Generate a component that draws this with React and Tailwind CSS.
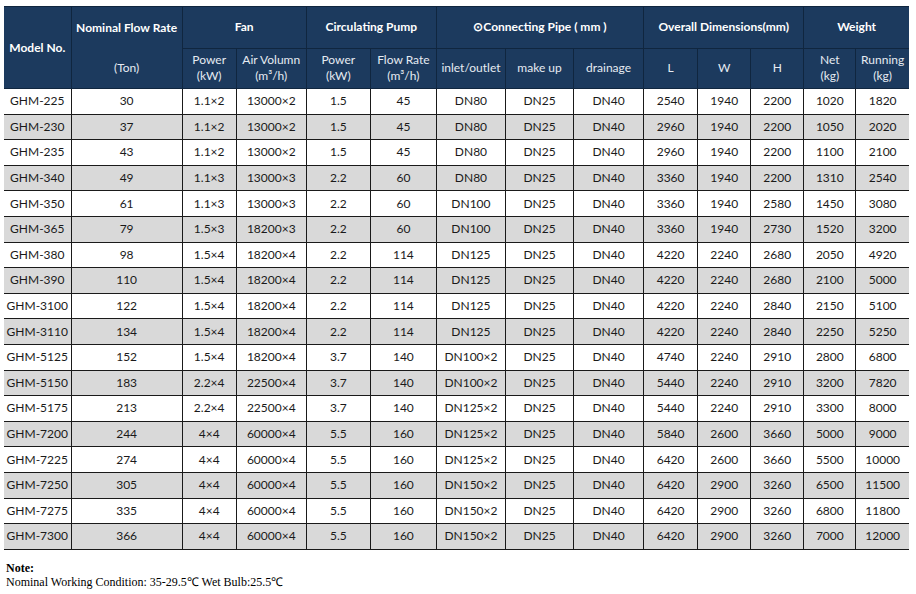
const ROWS = [
  ['GHM-225', '30', '1.1×2', '13000×2', '1.5', '45', 'DN80', 'DN25', 'DN40', '2540', '1940', '2200', '1020', '1820'],
  ['GHM-230', '37', '1.1×2', '13000×2', '1.5', '45', 'DN80', 'DN25', 'DN40', '2960', '1940', '2200', '1050', '2020'],
  ['GHM-235', '43', '1.1×2', '13000×2', '1.5', '45', 'DN80', 'DN25', 'DN40', '2960', '1940', '2200', '1100', '2100'],
  ['GHM-340', '49', '1.1×3', '13000×3', '2.2', '60', 'DN80', 'DN25', 'DN40', '3360', '1940', '2200', '1310', '2540'],
  ['GHM-350', '61', '1.1×3', '13000×3', '2.2', '60', 'DN100', 'DN25', 'DN40', '3360', '1940', '2580', '1450', '3080'],
  ['GHM-365', '79', '1.5×3', '18200×3', '2.2', '60', 'DN100', 'DN25', 'DN40', '3360', '1940', '2730', '1520', '3200'],
  ['GHM-380', '98', '1.5×4', '18200×4', '2.2', '114', 'DN125', 'DN25', 'DN40', '4220', '2240', '2680', '2050', '4920'],
  ['GHM-390', '110', '1.5×4', '18200×4', '2.2', '114', 'DN125', 'DN25', 'DN40', '4220', '2240', '2680', '2100', '5000'],
  ['GHM-3100', '122', '1.5×4', '18200×4', '2.2', '114', 'DN125', 'DN25', 'DN40', '4220', '2240', '2840', '2150', '5100'],
  ['GHM-3110', '134', '1.5×4', '18200×4', '2.2', '114', 'DN125', 'DN25', 'DN40', '4220', '2240', '2840', '2250', '5250'],
  ['GHM-5125', '152', '1.5×4', '18200×4', '3.7', '140', 'DN100×2', 'DN25', 'DN40', '4740', '2240', '2910', '2800', '6800'],
  ['GHM-5150', '183', '2.2×4', '22500×4', '3.7', '140', 'DN100×2', 'DN25', 'DN40', '5440', '2240', '2910', '3200', '7820'],
  ['GHM-5175', '213', '2.2×4', '22500×4', '3.7', '140', 'DN125×2', 'DN25', 'DN40', '5440', '2240', '2910', '3300', '8000'],
  ['GHM-7200', '244', '4×4', '60000×4', '5.5', '160', 'DN125×2', 'DN25', 'DN40', '5840', '2600', '3660', '5000', '9000'],
  ['GHM-7225', '274', '4×4', '60000×4', '5.5', '160', 'DN125×2', 'DN25', 'DN40', '6420', '2600', '3660', '5500', '10000'],
  ['GHM-7250', '305', '4×4', '60000×4', '5.5', '160', 'DN150×2', 'DN25', 'DN40', '6420', '2900', '3260', '6500', '11500'],
  ['GHM-7275', '335', '4×4', '60000×4', '5.5', '160', 'DN150×2', 'DN25', 'DN40', '6420', '2900', '3260', '6800', '11800'],
  ['GHM-7300', '366', '4×4', '60000×4', '5.5', '160', 'DN150×2', 'DN25', 'DN40', '6420', '2900', '3260', '7000', '12000'],
]

// column widths measured off the sheet
const WIDTHS = [67, 111, 54, 70, 64, 66, 69, 68, 70, 54, 53, 53, 52, 53]

const th = 'border border-[#10263f] text-center align-middle font-bold text-white'
const sub = 'border border-[#10263f] text-center align-middle font-normal text-[#e6ebf2] leading-[16px]'

export default function App() {
  return (
    <div className="bg-white w-[916px] h-[594px] pl-[4px] pt-[6px]" style={{ fontFamily: 'Lato, "Open Sans", sans-serif' }}>
      <table className="table-fixed border-collapse w-[905px] text-[12px]">
        <colgroup>
          {WIDTHS.map((w, i) => <col key={i} style={{ width: w }} />)}
        </colgroup>
        <thead className="bg-[#1c3a5e]">
          <tr className="h-[41px]">
            <th rowSpan={2} className={th + ' border-l-0'}>Model No.</th>
            <th rowSpan={2} className={th + ' p-0'}>
              <div className="flex flex-col h-[81px]">
                <div className="h-[41px] flex items-center justify-center">Nominal Flow Rate</div>
                <div className="h-[40px] flex items-center justify-center font-normal text-[#e6ebf2]">(Ton)</div>
              </div>
            </th>
            <th colSpan={2} className={th}>Fan</th>
            <th colSpan={2} className={th}>Circulating Pump</th>
            <th colSpan={3} className={th}>⊙Connecting Pipe ( mm )</th>
            <th colSpan={3} className={th}>Overall Dimensions(mm)</th>
            <th colSpan={2} className={th + ' border-r-0'}>Weight</th>
          </tr>
          <tr className="h-[40px]">
            <th className={sub}>Power<br />(kW)</th>
            <th className={sub}>Air Volumn<br />(m³/h)</th>
            <th className={sub}>Power<br />(kW)</th>
            <th className={sub}>Flow Rate<br />(m³/h)</th>
            <th className={sub}>inlet/outlet</th>
            <th className={sub}>make up</th>
            <th className={sub}>drainage</th>
            <th className={sub}>L</th>
            <th className={sub}>W</th>
            <th className={sub}>H</th>
            <th className={sub}>Net<br />(kg)</th>
            <th className={sub + ' border-r-0'}>Running<br />(kg)</th>
          </tr>
        </thead>
        <tbody className="text-[#1a1a1a]">
          {ROWS.map((r, i) => (
            <tr key={r[0]} className={i % 2 ? 'bg-[#d9d9d9] h-[25.6px]' : 'bg-white h-[25.6px]'}>
              {r.map((v, j) => (
                <td
                  key={j}
                  className={
                    'border-b border-[#1a1a1a] text-center p-0 leading-none ' +
                    (j > 0 ? 'border-l' : '')
                  }
                >
                  {v}
                </td>
              ))}
            </tr>
          ))}
        </tbody>
      </table>
      <div className="mt-[11px] pl-[2px] text-[12px] leading-[14px] text-black" style={{ fontFamily: '"Liberation Serif", serif' }}>
        <div className="font-bold">Note:</div>
        <div>Nominal Working Condition: 35-29.5℃ Wet Bulb:25.5℃</div>
      </div>
    </div>
  )
}
